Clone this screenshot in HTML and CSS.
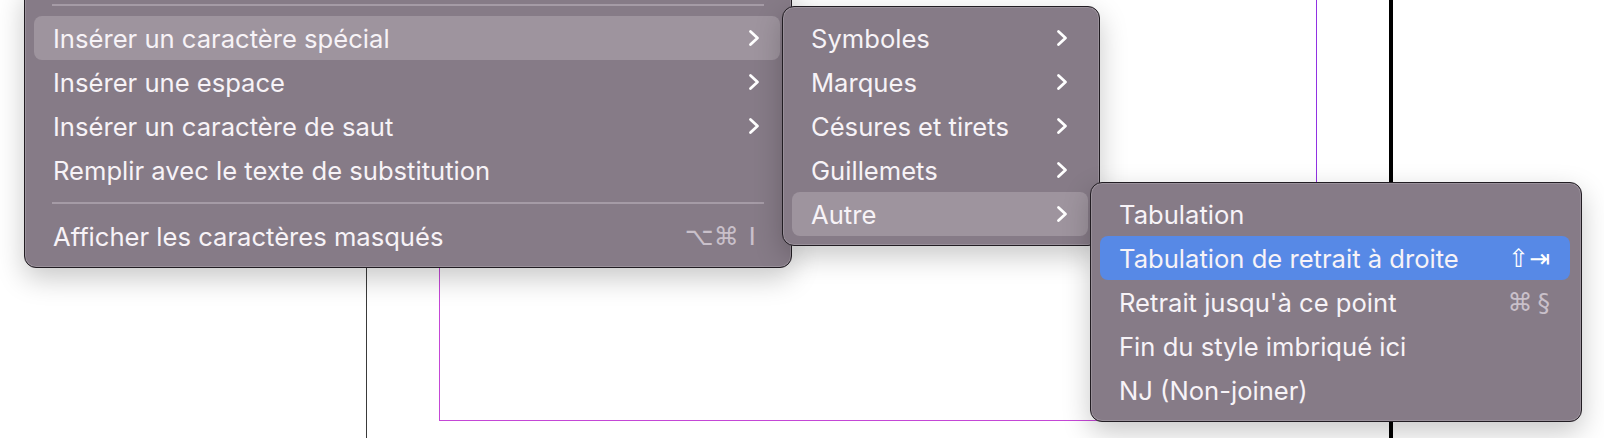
FILE: index.html
```html
<!DOCTYPE html>
<html lang="fr">
<head>
<meta charset="utf-8">
<title>Menu</title>
<link rel="stylesheet" href="styles.css">
</head>
<body>
<div class="canvas">
  <div class="guide guide-gray"></div>
  <div class="guide-frame"></div>
  <div class="guide guide-black"></div>

  <div class="menu menu-main">
    <div class="sep"><span></span></div>
    <div class="item active"><span class="label">Insérer un caractère spécial</span><svg class="chev" viewBox="0 0 12 18" width="12" height="18"><polyline points="2.5,2.5 9.5,9 2.5,15.5"/></svg></div>
    <div class="item"><span class="label">Insérer une espace</span><svg class="chev" viewBox="0 0 12 18" width="12" height="18"><polyline points="2.5,2.5 9.5,9 2.5,15.5"/></svg></div>
    <div class="item"><span class="label">Insérer un caractère de saut</span><svg class="chev" viewBox="0 0 12 18" width="12" height="18"><polyline points="2.5,2.5 9.5,9 2.5,15.5"/></svg></div>
    <div class="item"><span class="label">Remplir avec le texte de substitution</span></div>
    <div class="sep"><span></span></div>
    <div class="item"><span class="label">Afficher les caractères masqués</span><span class="key">⌥⌘&#8201;&#8201;I</span></div>
  </div>

  <div class="menu menu-sub">
    <div class="item"><span class="label">Symboles</span><svg class="chev" viewBox="0 0 12 18" width="12" height="18"><polyline points="2.5,2.5 9.5,9 2.5,15.5"/></svg></div>
    <div class="item"><span class="label">Marques</span><svg class="chev" viewBox="0 0 12 18" width="12" height="18"><polyline points="2.5,2.5 9.5,9 2.5,15.5"/></svg></div>
    <div class="item"><span class="label">Césures et tirets</span><svg class="chev" viewBox="0 0 12 18" width="12" height="18"><polyline points="2.5,2.5 9.5,9 2.5,15.5"/></svg></div>
    <div class="item"><span class="label">Guillemets</span><svg class="chev" viewBox="0 0 12 18" width="12" height="18"><polyline points="2.5,2.5 9.5,9 2.5,15.5"/></svg></div>
    <div class="item active"><span class="label">Autre</span><svg class="chev" viewBox="0 0 12 18" width="12" height="18"><polyline points="2.5,2.5 9.5,9 2.5,15.5"/></svg></div>
  </div>

  <div class="menu menu-sub2">
    <div class="item"><span class="label">Tabulation</span></div>
    <div class="item selected"><span class="label">Tabulation de retrait à droite</span><span class="key key-on">⇧⇥</span></div>
    <div class="item"><span class="label">Retrait jusqu'à ce point</span><span class="key">⌘&#8201;§</span></div>
    <div class="item"><span class="label">Fin du style imbriqué ici</span></div>
    <div class="item"><span class="label">NJ (Non-joiner)</span></div>
  </div>
</div>
</body>
</html>
```

FILE: styles.css
```css
html, body {
  margin: 0;
  padding: 0;
  background: #ffffff;
}

.canvas {
  position: relative;
  width: 1604px;
  height: 438px;
  overflow: hidden;
  background: #ffffff;
  font-family: Inter, "Noto Sans", "DejaVu Sans", sans-serif;
}

/* layout guides of the document page */
.guide {
  position: absolute;
  top: 0;
  bottom: 0;
}

.guide-gray {
  left: 366px;
  width: 1px;
  background: #3a3a3a;
}

.guide-black {
  left: 1389px;
  width: 4px;
  background: #000000;
}

.guide-frame {
  position: absolute;
  left: 439px;
  top: -10px;
  width: 878px;
  height: 431px;
  box-sizing: border-box;
  border-left: 1.5px solid #c447d6;
  border-bottom: 1.5px solid #c447d6;
  border-right: 1.5px solid #9132e2;
}

/* menus */
.menu {
  position: absolute;
  box-sizing: border-box;
  display: flex;
  flex-direction: column;
  padding: 9px 11px 9px 9px;
  background: #867b87;
  border: 1px solid #221d23;
  border-radius: 12px;
  box-shadow: inset 0 0 0 1px rgba(255, 255, 255, 0.16), 0 10px 28px rgba(0, 0, 0, 0.22);
  color: #f7f3f7;
  font-size: 25.6px;
  letter-spacing: 0;
}

.menu-main {
  left: 24px;
  top: -16px;
  width: 768px;
  height: 284px;
}

.menu-sub {
  left: 782px;
  top: 6px;
  width: 318px;
  height: 240px;
}

.menu-sub2 {
  left: 1090px;
  top: 182px;
  width: 492px;
  height: 240px;
}

.item {
  height: 44px;
  flex: none;
  display: flex;
  align-items: center;
  padding: 0 20px 0 19px;
  border-radius: 8px;
  white-space: nowrap;
}

.item.active {
  background: #9e949e;
}

.item.selected {
  background: #5789e6;
}

.label {
  flex: 1;
}

.chev {
  flex: none;
  fill: none;
  stroke: #ffffff;
  stroke-width: 2.8;
  stroke-linecap: round;
  stroke-linejoin: round;
}

.key {
  flex: none;
  font-family: "DejaVu Sans", sans-serif;
  font-size: 25px;
  color: #c9c0ca;
  padding-right: 4px;
}

.menu-sub2 .key {
  padding-right: 0;
}

.key-on {
  color: #ffffff;
}

.sep {
  height: 22px;
  flex: none;
  display: flex;
  align-items: center;
  padding: 0 16px 0 18px;
}

.sep span {
  flex: 1;
  height: 2px;
  background: #a59ba6;
}
```
